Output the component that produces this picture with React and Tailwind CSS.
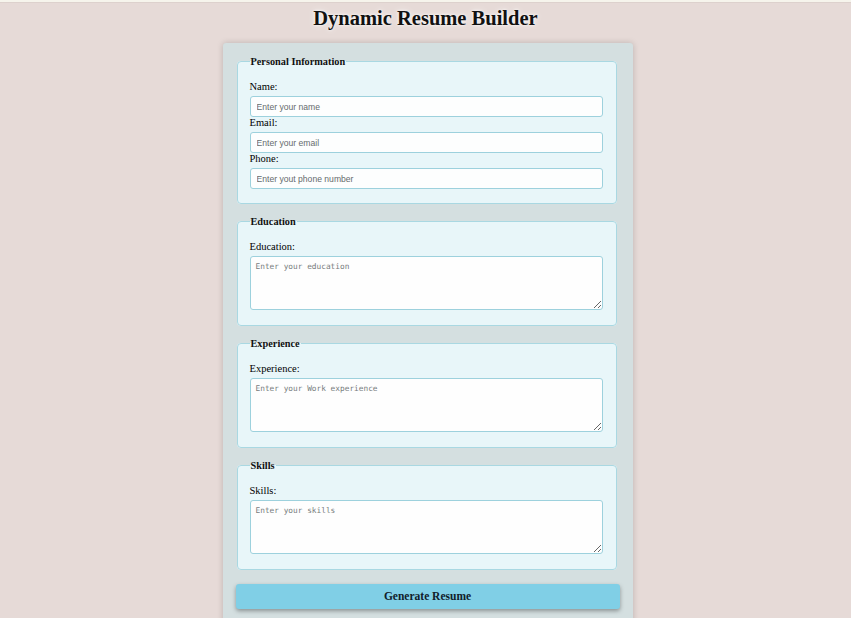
import { useState } from "react";

const serif = "font-['Liberation_Serif','Times_New_Roman',serif]";

function Field({ label, placeholder, value, onChange }) {
  return (
    <>
      <label className={`block text-[10.5px] leading-[12px] mb-[3px] text-black ${serif}`}>{label}</label>
      <input
        type="text"
        value={value}
        onChange={(e) => onChange(e.target.value)}
        placeholder={placeholder}
        className="block w-full h-[21px] bg-[#fdfefe] border border-[#9dd1dd] rounded-[3px] px-[6px] text-[8.6px] font-['Liberation_Sans',Arial,sans-serif] text-[#333] placeholder-[#656b6d] outline-none"
      />
    </>
  );
}

function Area({ label, placeholder, value, onChange }) {
  return (
    <>
      <label className={`block text-[10.5px] leading-[12px] mb-[3px] text-black ${serif}`}>{label}</label>
      <textarea
        value={value}
        onChange={(e) => onChange(e.target.value)}
        placeholder={placeholder}
        className="block w-full h-[54px] bg-[#fefefe] border border-[#9dd1dd] rounded-[3px] px-[5px] py-[5px] text-[7.8px] leading-[10px] font-['DejaVu_Sans_Mono','Liberation_Mono',monospace] text-[#333] placeholder-[#777c7d] outline-none"
      />
    </>
  );
}

function Section({ title, children, pb = "pb-[15px]" }) {
  return (
    <fieldset className={`border border-[#a9d8e2] rounded-[4px] bg-[#e8f6f9] pl-[12px] pr-[13px] pt-[13px] ${pb} mb-[11px] min-w-0`}>
      <legend className={`px-[1px] text-[10.3px] leading-[13px] font-bold text-[#111] ${serif}`}>{title}</legend>
      {children}
    </fieldset>
  );
}

export default function App() {
  const [form, setForm] = useState({ name: "", email: "", phone: "", education: "", experience: "", skills: "" });
  const set = (k) => (v) => setForm({ ...form, [k]: v });

  return (
    <div className="min-h-[618px] bg-[#e6dad7] overflow-hidden">
      <div className="h-[3px] bg-[#f6f4ec] border-b border-[#ddd1cd]" />
      <h1 className={`text-center text-[20.5px] leading-[24px] font-bold text-[#111] mt-[3px] ${serif} [text-shadow:0_0_3px_#fff,0_0_6px_#f4f0ee]`}>
        Dynamic Resume Builder
      </h1>
      <div className="w-[410px] mx-auto mt-[13px] bg-[#d4dfe0] rounded-t-[3px] shadow-[0_0_6px_rgba(0,0,0,0.18)] pl-[14px] pr-[16px] pt-[12px] pb-[20px] relative left-[2px]">
        <Section title="Personal Information" pb="pb-[14px]">
          <Field label="Name:" placeholder="Enter your name" value={form.name} onChange={set("name")} />
          <Field label="Email:" placeholder="Enter your email" value={form.email} onChange={set("email")} />
          <Field label="Phone:" placeholder="Enter yout phone number" value={form.phone} onChange={set("phone")} />
        </Section>
        <Section title="Education">
          <Area label="Education:" placeholder="Enter your education" value={form.education} onChange={set("education")} />
        </Section>
        <Section title="Experience">
          <Area label="Experience:" placeholder="Enter your Work experience" value={form.experience} onChange={set("experience")} />
        </Section>
        <Section title="Skills">
          <Area label="Skills:" placeholder="Enter your skills" value={form.skills} onChange={set("skills")} />
        </Section>
        <button
          type="button"
          className={`block -ml-[1px] w-[384px] h-[25px] mt-[14px] bg-[#80cfe6] rounded-[3px] shadow-[0_2px_4px_rgba(0,0,0,0.35)] text-[11.5px] font-bold text-[#10202a] ${serif}`}
        >
          Generate Resume
        </button>
      </div>
    </div>
  );
}
